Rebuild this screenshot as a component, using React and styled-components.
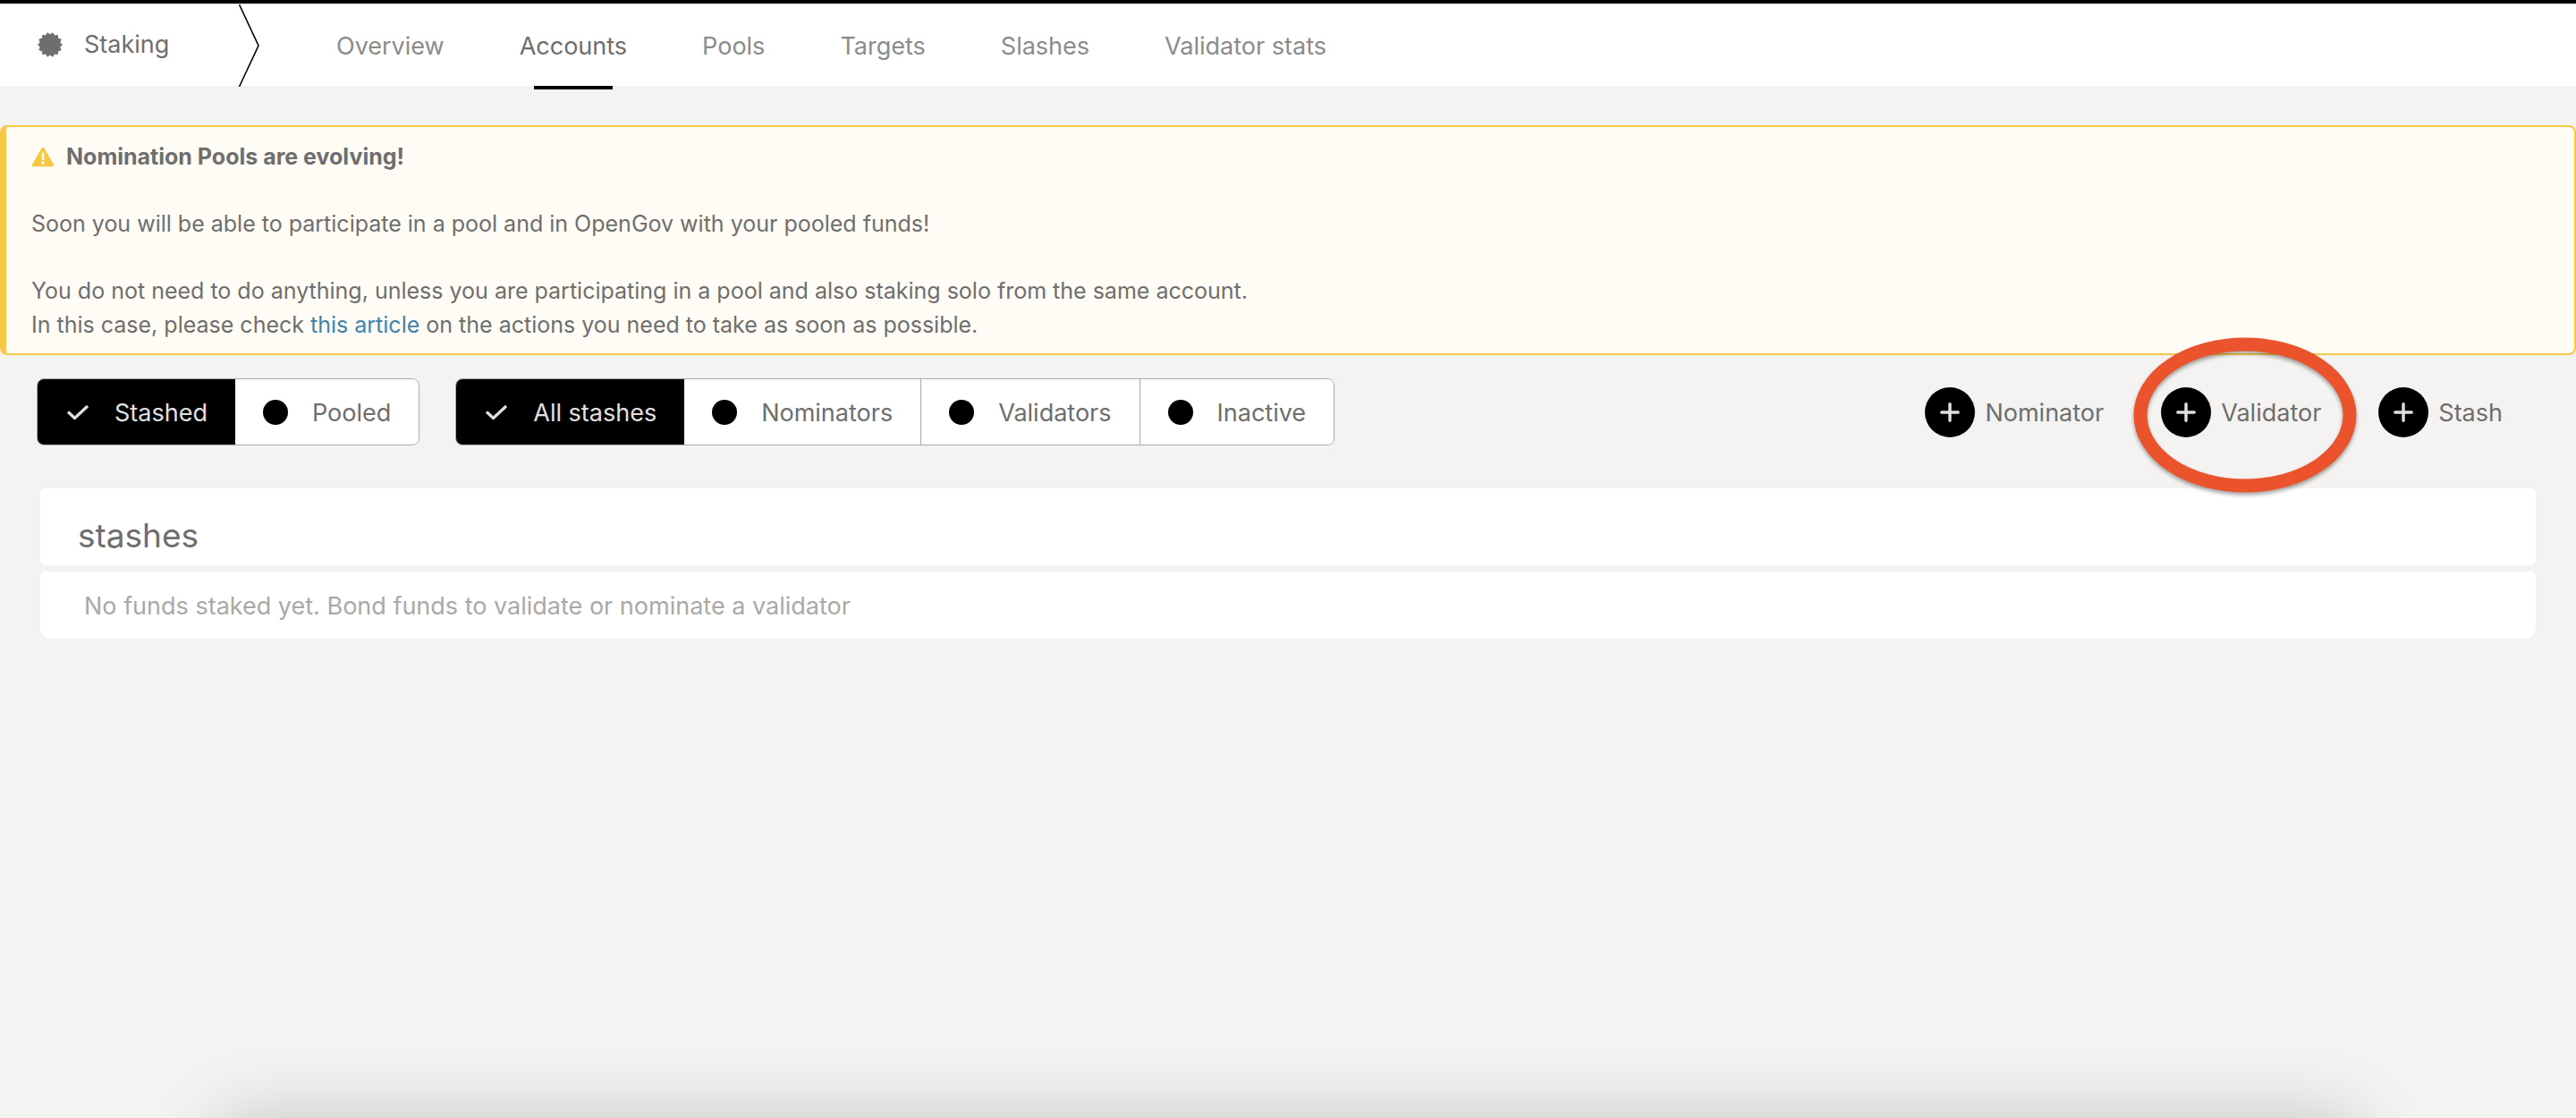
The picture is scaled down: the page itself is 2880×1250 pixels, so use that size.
import React from 'react';
import styled, { createGlobalStyle } from 'styled-components';

const GlobalStyle = createGlobalStyle`
  *, *::before, *::after { box-sizing: border-box; }
  body {
    margin: 0;
    background: #f4f3f1;
    color: #6e6e6e;
    font-family: Inter, "Liberation Sans", sans-serif;
    font-size: 27px;
    line-height: 40px;
  }
  button { font: inherit; color: inherit; cursor: pointer; }
  h1, h2, p { margin: 0; font-weight: 400; }
`;

const Page = styled.div`
  position: relative;
  min-height: 100vh;
  overflow: hidden;
`;

const TabBar = styled.header`
  display: flex;
  height: 96px;
  border-top: 4px solid #000;
  background: #fff;
`;

const Section = styled.div`
  display: flex;
  align-items: center;
  gap: 24px;
  width: 267px;
  padding-left: 42px;
`;

const SectionTitle = styled.h1`
  font-size: 27px;
`;

const Chevron = styled.svg`
  width: 24px;
  height: 94px;
  flex: none;
`;

const Tabs = styled.nav`
  display: flex;
  margin-left: 43px;
`;

const Tab = styled.a`
  display: flex;
  flex-direction: column;
  align-items: center;
  height: 96px;
  padding: 28px 42px 0;
  color: ${(p) => (p.$active ? '#6e6e6e' : '#8b8b8b')};
  text-decoration: none;

  &::after {
    content: '';
    width: ${(p) => (p.$active ? '88px' : '0')};
    height: 4px;
    margin-top: 24px;
    background: #000;
  }
`;

const Banner = styled.article`
  display: flex;
  flex-direction: column;
  gap: 37px;
  margin-top: 44px;
  padding: 14px 28px 13px;
  border: 2px solid #f7c846;
  border-left-width: 7px;
  border-radius: 8px;
  background: #fffcf5;
  font-size: 25px;
  line-height: 38px;
`;

const BannerTitle = styled.h2`
  display: flex;
  align-items: center;
  gap: 13px;
  font-size: 25px;
  font-weight: 700;
`;

const Link = styled.a`
  color: #4183ab;
  text-decoration: none;
`;

const Toolbar = styled.div`
  display: flex;
  justify-content: space-between;
  align-items: center;
  padding: 26px 82px 0 41px;
`;

const Filters = styled.div`
  display: flex;
  gap: 40px;
`;

const ToggleGroup = styled.div`
  display: flex;
  border: 1px solid #a9a9a9;
  border-radius: 8px;
  overflow: hidden;
`;

const Toggle = styled.button`
  display: flex;
  align-items: center;
  gap: 27px;
  height: 73px;
  padding: 0 31px;
  border: 0;
  border-left: ${(p) => (p.$divided ? '1px solid #a9a9a9' : '0')};
  background: ${(p) => (p.$on ? '#000' : '#fff')};
  color: ${(p) => (p.$on ? '#e0e0e0' : '#6e6e6e')};
`;

const Label = styled.span`
  padding-top: 2px;
`;

const Dot = styled.span`
  width: 28px;
  height: 28px;
  border-radius: 50%;
  background: #000;
`;

const Actions = styled.div`
  display: flex;
  gap: 64px;
`;

const Action = styled.button`
  display: flex;
  align-items: center;
  gap: 11px;
  padding: 0;
  border: 0;
  background: none;
`;

const RoundIcon = styled.span`
  display: grid;
  place-items: center;
  width: 56px;
  height: 56px;
  border-radius: 50%;
  background: #000;
`;

const Marked = styled.span`
  position: relative;
  display: flex;
`;

const Marker = styled.svg`
  position: absolute;
  left: -37px;
  top: -62px;
  width: 262px;
  height: 186px;
  pointer-events: none;
  filter: drop-shadow(0 3px 2px rgba(0, 0, 0, 0.35));
`;

const Panels = styled.main`
  display: flex;
  flex-direction: column;
  gap: 7px;
  margin: 48px 45px 0;
`;

const PanelHead = styled.section`
  padding: 28px 42px 8px;
  border-radius: 6px;
  background: #fff;
`;

const PanelTitle = styled.h2`
  font-size: 37px;
  line-height: 50px;
`;

const PanelBody = styled.section`
  padding: 19px 49px 16px;
  border-radius: 6px 6px 12px 12px;
  background: #fff;
  color: #a9a9a9;
`;

const BottomShade = styled.div`
  position: absolute;
  left: 240px;
  right: 240px;
  bottom: -200px;
  height: 200px;
  border-radius: 40px;
  box-shadow: 0 0 80px rgba(0, 0, 0, 0.2);
`;

const CertificateIcon = () => {
  const points = Array.from({ length: 28 }, (_, i) => {
    const r = i % 2 ? 13.6 : 11.2;
    const a = (i * Math.PI) / 14;
    return `${14 + r * Math.sin(a)},${14 - r * Math.cos(a)}`;
  }).join(' ');
  return (
    <svg width="28" height="28" viewBox="0 0 28 28" aria-hidden="true">
      <polygon points={points} fill="#6e6e6e" stroke="#6e6e6e" strokeWidth="0.8" strokeLinejoin="round" />
    </svg>
  );
};

const WarningIcon = () => (
  <svg width="26" height="23" viewBox="0 0 26 23" aria-hidden="true">
    <path d="M13 2.5 L23.5 20.5 H2.5 Z" fill="#f7c846" stroke="#f7c846" strokeWidth="3.4" strokeLinejoin="round" />
    <path d="M13 8 V14" stroke="#fffcf5" strokeWidth="2.6" strokeLinecap="round" />
    <circle cx="13" cy="18" r="1.7" fill="#fffcf5" />
  </svg>
);

const CheckIcon = () => (
  <svg width="28" height="20" viewBox="0 0 28 20" aria-hidden="true">
    <path d="M3 9.5 L10.5 16.5 L25 3" fill="none" stroke="#e0e0e0" strokeWidth="3.2" strokeLinejoin="round" />
  </svg>
);

const PlusIcon = () => (
  <svg width="24" height="24" viewBox="0 0 24 24" aria-hidden="true">
    <path d="M12 2.8 V21.2 M2.8 12 H21.2" stroke="#e0e0e0" strokeWidth="3.4" strokeLinecap="round" />
  </svg>
);

const tabs = ['Overview', 'Accounts', 'Pools', 'Targets', 'Slashes', 'Validator stats'];
const groups = [
  ['Stashed', 'Pooled'],
  ['All stashes', 'Nominators', 'Validators', 'Inactive'],
];

const AddButton = ({ label }) => (
  <Action type="button">
    <RoundIcon><PlusIcon /></RoundIcon>
    <Label>{label}</Label>
  </Action>
);

export default function App() {
  return (
    <Page>
      <GlobalStyle />
      <TabBar>
        <Section>
          <CertificateIcon />
          <SectionTitle>Staking</SectionTitle>
        </Section>
        <Chevron viewBox="0 0 24 94" aria-hidden="true">
          <path d="M0.5 1 L22 47 L0.5 93" fill="none" stroke="#000" strokeWidth="1.6" />
        </Chevron>
        <Tabs>
          {tabs.map((t) => (
            <Tab key={t} href="#" $active={t === 'Accounts'}>{t}</Tab>
          ))}
        </Tabs>
      </TabBar>
      <Banner>
        <BannerTitle><WarningIcon />Nomination Pools are evolving!</BannerTitle>
        <p>Soon you will be able to participate in a pool and in OpenGov with your pooled funds!</p>
        <p>
          You do not need to do anything, unless you are participating in a pool and also staking solo from the same account.
          <br />
          In this case, please check <Link href="#">this article</Link> on the actions you need to take as soon as possible.
        </p>
      </Banner>
      <Toolbar>
        <Filters>
          {groups.map((group) => (
            <ToggleGroup key={group[0]}>
              {group.map((label, i) => (
                <Toggle key={label} type="button" $on={i === 0} $divided={i > 1}>
                  {i === 0 ? <CheckIcon /> : <Dot />}
                  <Label>{label}</Label>
                </Toggle>
              ))}
            </ToggleGroup>
          ))}
        </Filters>
        <Actions>
          <AddButton label="Nominator" />
          <Marked>
            <AddButton label="Validator" />
            <Marker viewBox="0 0 262 186" aria-hidden="true">
              <ellipse cx="131" cy="93" rx="117" ry="79" fill="none" stroke="#eb532d" strokeWidth="15" />
            </Marker>
          </Marked>
          <AddButton label="Stash" />
        </Actions>
      </Toolbar>
      <Panels>
        <PanelHead><PanelTitle>stashes</PanelTitle></PanelHead>
        <PanelBody><p>No funds staked yet. Bond funds to validate or nominate a validator</p></PanelBody>
      </Panels>
      <BottomShade />
    </Page>
  );
}
